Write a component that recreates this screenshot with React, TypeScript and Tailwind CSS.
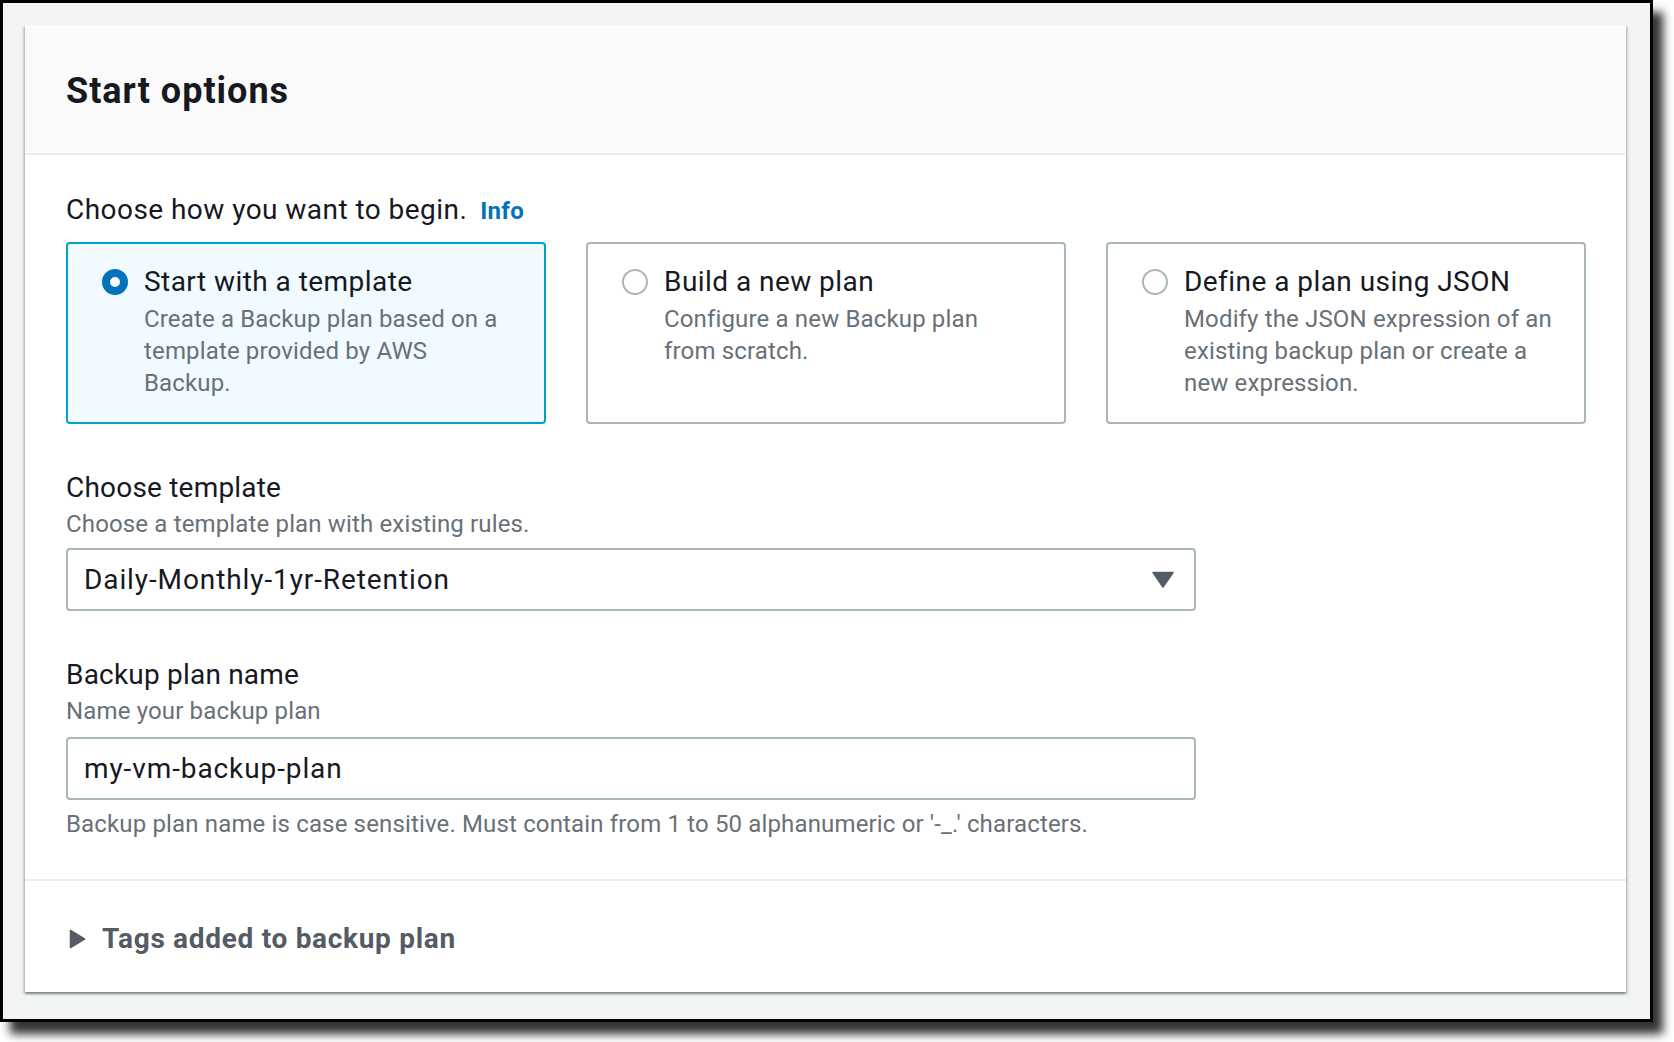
import React, { FC } from "react";

/** ===== Data ===== */
type Option = { id: string; title: string; description: string };

const OPTIONS: Option[] = [
  {
    id: "template",
    title: "Start with a template",
    description: "Create a Backup plan based on a template provided by AWS Backup.",
  },
  {
    id: "new",
    title: "Build a new plan",
    description: "Configure a new Backup plan from scratch.",
  },
  {
    id: "json",
    title: "Define a plan using JSON",
    description: "Modify the JSON expression of an existing backup plan or create a new expression.",
  },
];

/** ===== Small pieces ===== */
const Radio: FC<{ checked: boolean }> = ({ checked }) => (
  <svg width="26" height="26" viewBox="0 0 26 26" className="shrink-0">
    {checked ? (
      <circle cx="13" cy="13" r="9" fill="#ffffff" stroke="#0073bb" strokeWidth="8" />
    ) : (
      <circle cx="13" cy="13" r="12" fill="#ffffff" stroke="#aab7b8" strokeWidth="2" />
    )}
  </svg>
);

const Tile: FC<{ option: Option; selected: boolean }> = ({ option, selected }) => (
  <div
    className={
      selected
        ? "rounded-[4px] border-2 border-[#00a1c9] bg-[#f1faff] pl-[34px] pr-[31px] pt-[17px] pb-[23px]"
        : "rounded-[4px] border-2 border-[#aab7b8] bg-white pl-[34px] pr-[31px] pt-[17px] pb-[23px]"
    }
  >
    <div className="flex items-center gap-[16px]">
      <Radio checked={selected} />
      <span className="text-[28px] leading-[42px] tracking-[0.45px] text-[#16191f]">{option.title}</span>
    </div>
    <p className="pl-[42px] text-[24px] leading-[32px] tracking-[0.15px] text-[#687078]">{option.description}</p>
  </div>
);

const Field: FC<{ label: string; description: string; gap: string; children: React.ReactNode }> = ({
  label,
  description,
  gap,
  children,
}) => (
  <div>
    <div className="text-[28px] leading-[44px] tracking-[0.2px] text-[#16191f]">{label}</div>
    <div className="text-[24px] leading-[28px] tracking-[0.15px] text-[#687078]">{description}</div>
    <div className={gap}>{children}</div>
  </div>
);

/** ===== Page ===== */
export default function App() {
  return (
    <div className="min-h-screen bg-white" style={{ fontFamily: "Roboto, 'Noto Sans', sans-serif" }}>
      <div className="box-border h-[1022px] w-[1653px] border-[3px] border-black bg-[#f2f3f3] pl-[22px] pt-[22px] shadow-[10px_12px_9px_rgba(0,0,0,0.8)]">
        <section className="w-[1601px] bg-white shadow-[0_2px_2px_0_rgba(0,28,36,0.3),2px_2px_2px_0_rgba(0,28,36,0.15),-2px_2px_2px_0_rgba(0,28,36,0.15)]">
          {/* Header */}
          <header className="box-border h-[130px] border-b-2 border-[#eaeded] bg-[#fafafa] px-[41px] pt-[44px]">
            <h2 className="text-[36px] font-bold leading-[44px] tracking-[1px] text-[#16191f]">Start options</h2>
          </header>

          {/* Body */}
          <div className="px-[41px] pt-[33px] pb-[41px]">
            <div className="flex items-baseline text-[28px] leading-[44px] tracking-[0.45px] text-[#16191f]">
              <span>Choose how you want to begin.</span>
              <span className="ml-[13px] text-[24px] font-bold tracking-[0.3px] text-[#0073bb]">Info</span>
            </div>

            <div className="mt-[9px] grid grid-cols-[480px_480px_480px] gap-x-[40px]">
              {OPTIONS.map((o, i) => (
                <Tile key={o.id} option={o} selected={i === 0} />
              ))}
            </div>

            <div className="mt-[42px] w-[1130px]">
              <Field label="Choose template" description="Choose a template plan with existing rules." gap="mt-[10px]">
                <div className="box-border flex h-[63px] items-center justify-between rounded-[4px] border-2 border-[#aab7b8] bg-white pl-[16px] pr-[20px]">
                  <span className="text-[28px] tracking-[0.9px] text-[#16191f]">Daily-Monthly-1yr-Retention</span>
                  <svg width="22" height="17" viewBox="0 0 22 17">
                    <path d="M1 1.5 H21 L11 16 Z" fill="#545b64" stroke="#545b64" strokeWidth="1.5" strokeLinejoin="round" />
                  </svg>
                </div>
              </Field>
            </div>

            <div className="mt-[42px] w-[1130px]">
              <Field label="Backup plan name" description="Name your backup plan" gap="mt-[12px]">
                <div className="box-border flex h-[63px] items-center rounded-[4px] border-2 border-[#aab7b8] bg-white pl-[16px]">
                  <span className="text-[28px] tracking-[0.9px] text-[#16191f]">my-vm-backup-plan</span>
                </div>
              </Field>
              <div className="mt-[10px] text-[24px] leading-[28px] tracking-[0.15px] text-[#687078]">
                Backup plan name is case sensitive. Must contain from 1 to 50 alphanumeric or '-_.' characters.
              </div>
            </div>
          </div>

          {/* Footer: expandable section */}
          <div className="border-t-2 border-[#eaeded] px-[41px] pt-[36px] pb-[31px]">
            <div className="flex items-center gap-[16px] pl-[3px]">
              <svg width="17" height="20" viewBox="0 0 17 20">
                <path d="M1.5 1.5 L15.5 10 L1.5 18.5 Z" fill="#545b64" stroke="#545b64" strokeWidth="1.5" strokeLinejoin="round" />
              </svg>
              <span className="text-[28px] font-bold leading-[44px] tracking-[0.7px] text-[#545b64]">Tags added to backup plan</span>
            </div>
          </div>
        </section>
      </div>
    </div>
  );
}
